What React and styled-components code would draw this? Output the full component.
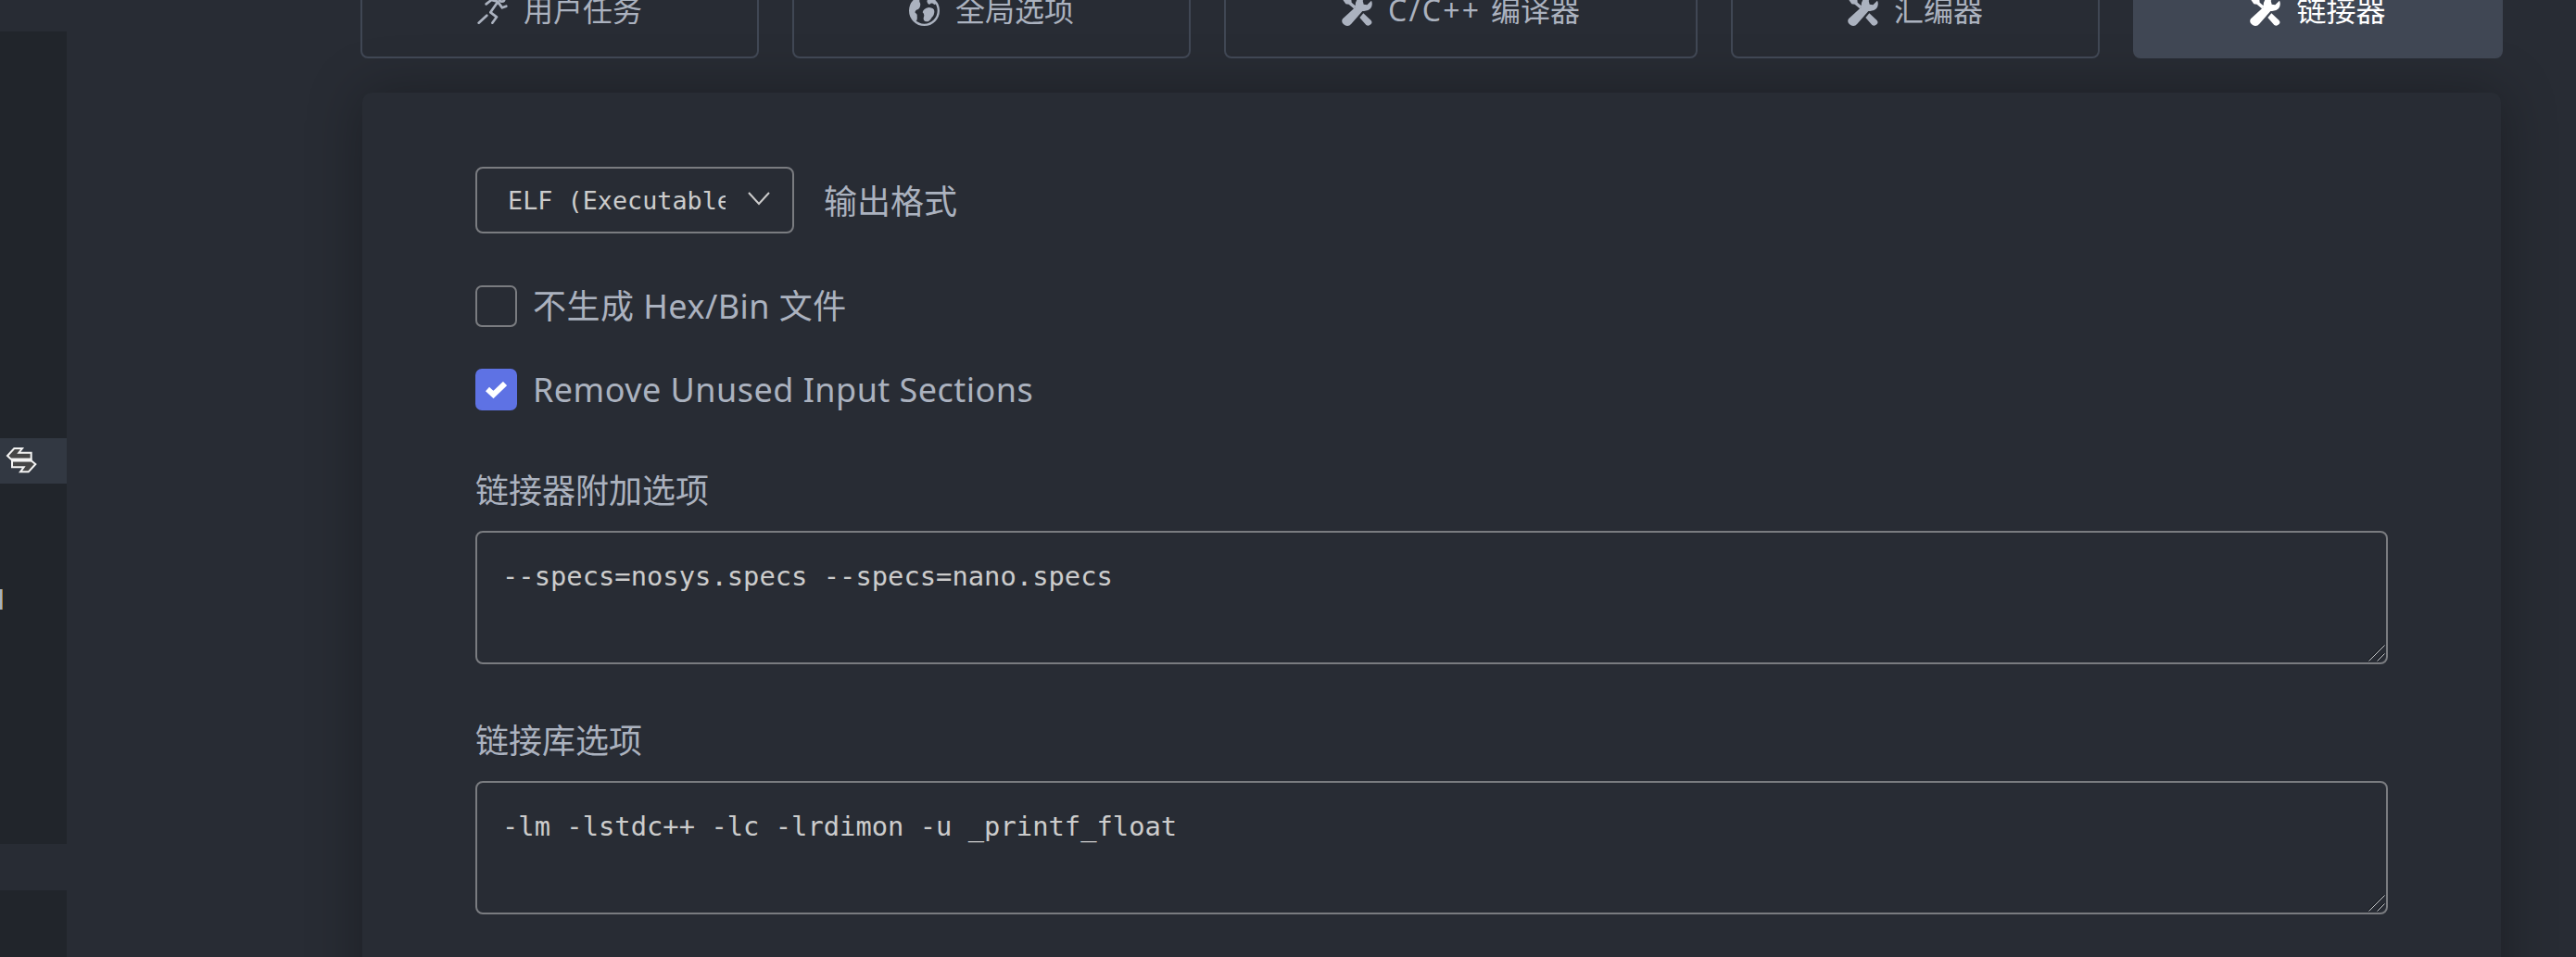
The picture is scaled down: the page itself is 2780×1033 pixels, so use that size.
// src/App.jsx
import styled, { createGlobalStyle } from 'styled-components';

const GlobalStyle = createGlobalStyle`
  * {
    box-sizing: border-box;
  }
  body {
    margin: 0;
    background: #282c34;
    color: #abb2bf;
    font-family: 'Noto Sans', 'Noto Sans CJK SC', sans-serif;
  }
`;

const Page = styled.div`
  display: flex;
  height: 1033px;
  overflow: hidden;
`;

const Sidebar = styled.aside`
  display: flex;
  flex-direction: column;
  gap: 50px;
  width: 72px;
  padding-top: 34px;
  flex-shrink: 0;
`;

const SideBlock = styled.div`
  background: #21252b;
  height: ${(props) => props.$height}px;
  flex-shrink: 0;
  padding-top: ${(props) => props.$top || 0}px;
`;

const SideItem = styled.div`
  display: flex;
  align-items: center;
  height: 49px;
  padding: 0 0 1px 6px;
  background: #323842;
`;

const SideText = styled.div`
  width: 3px;
  height: 22px;
  margin-top: 114px;
  background: #a3b3bf;
  border-right: 1px solid #b07b2c;
`;

const Main = styled.main`
  margin-left: 317px;
  width: 2312px;
`;

const Tabs = styled.nav`
  display: flex;
  gap: 36px;
  margin-top: -41px;
`;

const Tab = styled.button`
  display: flex;
  align-items: center;
  justify-content: center;
  gap: 17px;
  width: ${(props) => props.$width}px;
  height: 104px;
  padding: 0;
  border: 2px solid #404754;
  border-radius: 8px;
  background: ${(props) => (props.$active ? '#404754' : 'transparent')};
  color: ${(props) => (props.$active ? '#fff' : '#abb2bf')};
  font-family: inherit;
  font-size: 32px;
  line-height: 48px;
  white-space: nowrap;

  svg {
    flex-shrink: 0;
  }
`;

const Latin = styled.span`
  letter-spacing: 2.3px;
`;

const Panel = styled.section`
  margin: 37px 2px 0;
  height: 1100px;
  padding: 80px 122px 0;
  border-radius: 10px;
  background: #282c34;
  box-shadow: 0 0 60px rgba(0, 0, 0, 0.3);
`;

const SelectRow = styled.div`
  display: flex;
  align-items: center;
  gap: 32px;
  height: 72px;
  margin-bottom: 56px;
`;

const Select = styled.div`
  display: flex;
  align-items: center;
  width: 344px;
  height: 72px;
  padding: 0 24px 0 33px;
  border: 2px solid #7a7c80;
  border-radius: 8px;

  svg {
    flex-shrink: 0;
    margin-bottom: 3px;
  }
`;

const SelectValue = styled.span`
  width: 235px;
  margin-right: 24px;
  overflow: hidden;
  white-space: nowrap;
  color: #ccc;
  font-family: 'DejaVu Sans Mono', monospace;
  font-size: 26.8px;
`;

const Label = styled.span`
  display: block;
  font-size: 36px;
  line-height: 54px;
  white-space: nowrap;
`;

const SelectLabel = styled(Label)`
  padding-top: 3px;
`;

const CheckRow = styled.label`
  display: flex;
  align-items: center;
  gap: 17px;
  height: 45px;
  margin-bottom: 45px;
`;

const Box = styled.span`
  display: flex;
  align-items: center;
  justify-content: center;
  width: 45px;
  height: 45px;
  border: 2px solid ${(props) => (props.$checked ? '#5e72e4' : '#7a7c80')};
  border-radius: 7px;
  background: ${(props) => (props.$checked ? '#5e72e4' : 'transparent')};
`;

const CheckText = styled(Label)`
  letter-spacing: 0.46px;
`;

const Field = styled.div`
  padding-top: ${(props) => props.$top}px;
`;

const AreaWrap = styled.div`
  position: relative;
  height: 144px;
  margin-top: 16px;
`;

const Area = styled.textarea`
  display: block;
  width: 100%;
  height: 144px;
  padding: 27px;
  border: 2px solid #7a7c80;
  border-radius: 8px;
  outline: none;
  resize: none;
  background: transparent;
  color: #ccc;
  font-family: 'DejaVu Sans Mono', monospace;
  font-size: 28.8px;
  line-height: 40px;
`;

const Grip = styled.svg`
  position: absolute;
  right: 3px;
  bottom: 3px;
`;

const RunIcon = () => (
  <svg width="33" height="33" viewBox="0 0 99 99" fill="none" stroke="currentColor" strokeWidth="8" strokeLinecap="round" strokeLinejoin="round">
    <path d="M5 89 31 65M49 89 63 70 43 55 64 25M29 28 46 15 66 20 81 40 94 35" />
    <circle cx="80" cy="12" r="8" />
  </svg>
);

const GlobeIcon = () => (
  <svg width="33" height="33" viewBox="0 0 99 99">
    <circle cx="49.500" cy="49.500" r="46" fill="none" stroke="currentColor" strokeWidth="7" />
    <path
      fill="currentColor"
      d="M8 28C15 12 28 6 35 12Q32 20 36 25Q39 36 30 45Q18 49 20 56Q28 60 26 68Q28 80 22 83Q5 70 4 50ZM58 18Q60 30 67 29Q73 22 82 30L90 27Q82 10 65 6ZM44 55Q46 43 64 39Q82 40 82 52Q82 65 74 71Q66 86 56 85Q46 84 47 73Q52 61 44 55Z"
    />
  </svg>
);

const ToolsIcon = () => (
  <svg width="33" height="33" viewBox="0 0 99 99">
    <path
      fill="currentColor"
      d="M3 76 44 38Q42 14 62 3Q72 -1 82 3L68 17 71 29 82 31 96 17Q102 31 93 43Q84 53 67 51L31 92Q22 103 9 96Q-4 88 3 76ZM4 3 13 0 31 13 32 23 46 35 39 43 23 29 13 28 0 9ZM70 58 94 80Q101 87 94 94Q87 101 79 96L58 72Z"
    />
  </svg>
);

const SwapIcon = () => (
  <svg width="35" height="30" viewBox="18 127 105 90" strokeLinejoin="miter">
    <path fill="#464646" stroke="#f4f4f4" strokeWidth="6" d="M24 157 46 133H72L61 147H101V168H36Z" />
    <path fill="#464646" stroke="#f4f4f4" strokeWidth="6" d="M39 173H101L115 184 92 209H66L77 194H39Z" />
    <path fill="#f4f4f4" d="M36 165H103V176H36Z" />
  </svg>
);

const tabs = [
  { text: '用户任务', width: 430, Icon: RunIcon },
  { text: '全局选项', width: 430, Icon: GlobeIcon },
  { latin: 'C/C++ ', text: '编译器', width: 511, Icon: ToolsIcon },
  { text: '汇编器', width: 398, Icon: ToolsIcon },
  { text: '链接器', width: 399, Icon: ToolsIcon, active: true },
];

const TextField = ({ label, value, top }) => (
  <Field $top={top}>
    <Label>{label}</Label>
    <AreaWrap>
      <Area defaultValue={value} spellCheck={false} />
      <Grip width="18" height="18" viewBox="0 0 18 18" fill="none">
        <path d="M0 16.500 16.500 0M9 16.500 16.500 9" stroke="#15181d" />
        <path d="M.5 17.500 17.500 .5M9.500 17.500 17.500 9.500" stroke="#c8cacd" />
      </Grip>
    </AreaWrap>
  </Field>
);

export default function App() {
  return (
    <Page>
      <GlobalStyle />
      <Sidebar>
        <SideBlock $height={877} $top={439}>
          <SideItem>
            <SwapIcon />
          </SideItem>
          <SideText />
        </SideBlock>
        <SideBlock $height={72} />
      </Sidebar>
      <Main>
        <Tabs>
          {tabs.map(({ latin, text, width, Icon, active }) => (
            <Tab key={text} $width={width} $active={active}>
              <Icon />
              <span>
                {latin && <Latin>{latin}</Latin>}
                {text}
              </span>
            </Tab>
          ))}
        </Tabs>
        <Panel>
          <SelectRow>
            <Select>
              <SelectValue>ELF (Executable</SelectValue>
              <svg width="24" height="15" viewBox="0 0 24 15" fill="none" stroke="#ccc" strokeWidth="2">
                <path d="M1 1 12 13 23 1" />
              </svg>
            </Select>
            <SelectLabel>输出格式</SelectLabel>
          </SelectRow>
          <CheckRow>
            <Box />
            <CheckText>不生成 Hex/Bin 文件</CheckText>
          </CheckRow>
          <CheckRow>
            <Box $checked>
              <svg width="23" height="18" viewBox="0 0 23 18" fill="none" stroke="#fff" strokeWidth="6">
                <path d="M2 8 8.500 14 21 2" />
              </svg>
            </Box>
            <CheckText>Remove Unused Input Sections</CheckText>
          </CheckRow>
          <TextField label="链接器附加选项" value="--specs=nosys.specs --specs=nano.specs" top={15} />
          <TextField label="链接库选项" value="-lm -lstdc++ -lc -lrdimon -u _printf_float" top={56} />
        </Panel>
      </Main>
    </Page>
  );
}
